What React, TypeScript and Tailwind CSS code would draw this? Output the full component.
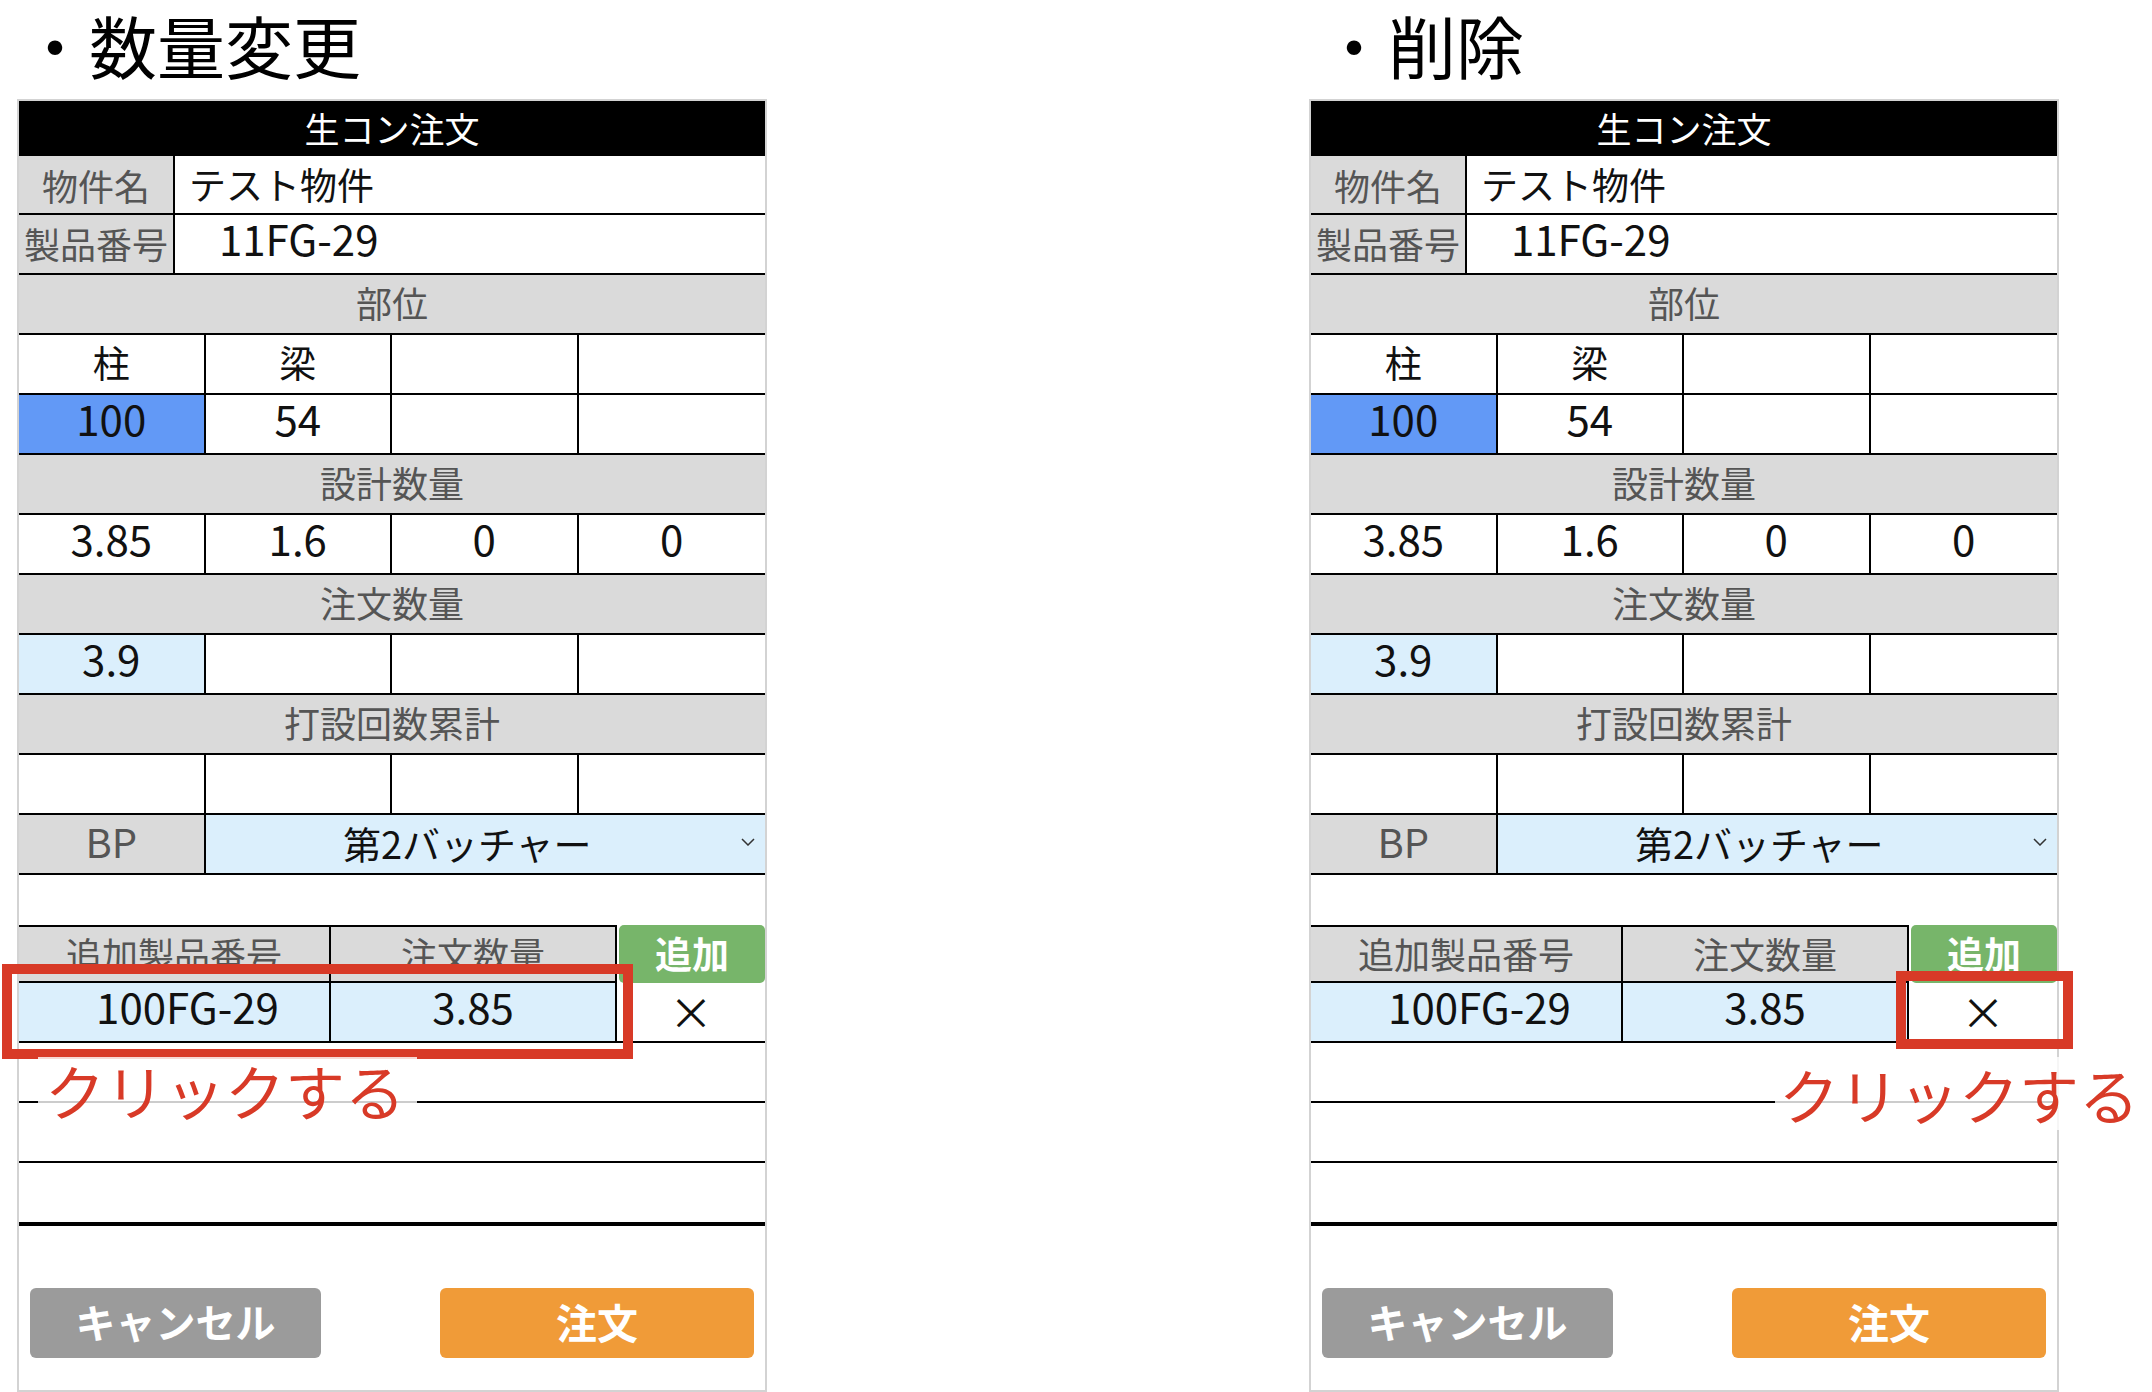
import React from "react";

const FONT = '"Noto Sans CJK JP", "Noto Sans", sans-serif';

const NUM = "text-[42px] leading-none pb-[13px]";
const CJK = "text-[37px] leading-none pb-[4px]";

function Grid4({ cells, bgs }: { cells: string[]; bgs?: string[] }) {
  return (
    <div className="grid grid-cols-4 h-[60px] border-b-2 border-black">
      {cells.map((c, i) => {
        const isNum = /^[0-9.]+$/.test(c);
        return (
          <div
            key={i}
            className={
              "flex items-center justify-center text-[#111] " +
              (isNum ? NUM + " " : CJK + " ") +
              (i < 3 ? "border-r-2 border-black " : "") +
              (bgs && bgs[i] ? bgs[i] : "bg-white")
            }
          >
            {c}
          </div>
        );
      })}
    </div>
  );
}

function Section({ label }: { label: string }) {
  return (
    <div className="h-[60px] bg-[#dadada] border-b-2 border-black flex items-center justify-center text-[#555] text-[36px] leading-none pb-[4px]">
      {label}
    </div>
  );
}

function Panel() {
  return (
    <div className="w-[750px] h-[1293px] border-2 border-[#d3d3d3] flex flex-col bg-white">
      <div className="h-[55px] bg-black text-white text-[35px] leading-none flex items-center justify-center pb-[2px]">
        生コン注文
      </div>
      <div className="h-[59px] flex border-b-2 border-black">
        <div className="w-[156px] bg-[#dadada] border-r-2 border-black flex items-center justify-center text-[#555] text-[36px] leading-none">
          物件名
        </div>
        <div className="flex-1 flex items-center pl-[14px] text-[37px] leading-none text-[#111]">
          テスト物件
        </div>
      </div>
      <div className="h-[60px] flex border-b-2 border-black">
        <div className="w-[156px] bg-[#dadada] border-r-2 border-black flex items-center justify-center text-[#555] text-[36px] leading-none pb-[2px]">
          製品番号
        </div>
        <div className={"flex-1 flex items-center pl-[44px] text-[#111] " + NUM}>11FG-29</div>
      </div>
      <Section label="部位" />
      <Grid4 cells={["柱", "梁", "", ""]} />
      <Grid4 cells={["100", "54", "", ""]} bgs={["bg-[#6299f6]", "", "", ""]} />
      <Section label="設計数量" />
      <Grid4 cells={["3.85", "1.6", "0", "0"]} />
      <Section label="注文数量" />
      <Grid4 cells={["3.9", "", "", ""]} bgs={["bg-[#dbeffc]", "", "", ""]} />
      <Section label="打設回数累計" />
      <Grid4 cells={["", "", "", ""]} />
      <div className="grid grid-cols-4 h-[60px] border-b-2 border-black">
        <div className="bg-[#dadada] border-r-2 border-black flex items-center justify-center text-[#555] text-[40px] leading-none pb-[6px]">
          BP
        </div>
        <div className="col-span-3 bg-[#dbeffc] flex items-center">
          <div className="flex-1 flex items-center justify-center text-[38px] leading-none text-[#111] pb-[2px] pl-[4px]">
            第2バッチャー
          </div>
          <div className="w-[40px] flex items-center justify-end pr-[10px] pb-[4px]">
            <svg width="14" height="8" viewBox="0 0 14 8">
              <polyline points="1,1 7,7 13,1" fill="none" stroke="#333" strokeWidth="1.5" />
            </svg>
          </div>
        </div>
      </div>
      <div className="h-[50px]" />
      <div className="h-[58px] flex">
        <div className="w-[598px] flex border-y-2 border-black">
          <div className="w-[312px] bg-[#dadada] border-r-2 border-black flex items-center justify-center text-[#555] text-[36px] leading-none pb-[2px]">
            追加製品番号
          </div>
          <div className="flex-1 bg-[#dadada] border-r-2 border-black flex items-center justify-center text-[#555] text-[36px] leading-none pb-[2px]">
            注文数量
          </div>
        </div>
        <div className="flex-1 ml-[2px] bg-[#77b56a] rounded-[5px] flex items-center justify-center text-white font-bold text-[37px] leading-none pb-[2px]">
          追加
        </div>
      </div>
      <div className="h-[60px] flex border-b-2 border-black">
        <div className={"w-[312px] bg-[#dbeffc] border-r-2 border-black flex items-center justify-center pl-[27px] text-[#111] " + NUM}>
          100FG-29
        </div>
        <div className={"w-[286px] bg-[#dbeffc] border-r-2 border-black flex items-center justify-center text-[#111] " + NUM}>
          3.85
        </div>
        <div className="flex-1 flex items-center justify-center text-[44px] leading-none text-[#111] pb-[2px]">
          ×
        </div>
      </div>
      <div className="h-[60px] border-b-2 border-black" />
      <div className="h-[60px] border-b-2 border-black" />
      <div className="h-[63px] border-b-4 border-black" />
      <div className="h-[62px]" />
      <div className="h-[70px] flex justify-between px-[11px]">
        <div className="w-[291px] bg-[#9b9b9b] rounded-[6px] flex items-center justify-center text-white font-bold text-[40px] leading-none pb-[4px]">
          キャンセル
        </div>
        <div className="w-[314px] bg-[#f09b38] rounded-[6px] flex items-center justify-center text-white font-bold text-[41px] leading-none pb-[4px]">
          注文
        </div>
      </div>
    </div>
  );
}

export default function App() {
  return (
    <div
      className="relative w-[2152px] h-[1392px] overflow-hidden bg-white text-black"
      style={{ fontFamily: FONT }}
    >
      <div className="flex pl-[17px] gap-[542px]">
        <div className="flex flex-col">
          <div className="h-[99px] pt-[4px] pl-[4px] text-[68px] leading-[1.2]">・数量変更</div>
          <Panel />
        </div>
        <div className="flex flex-col">
          <div className="h-[99px] pt-[4px] pl-[11px] text-[68px] leading-[1.2]">・削除</div>
          <Panel />
        </div>
      </div>

      {/* annotations */}
      <div className="absolute left-[2px] top-[964px] w-[631px] h-[95px] border-[10px] border-[#d83a27]" />
      <div className="absolute left-[38px] top-[1057px] w-[379px] h-[66px] bg-white/80 flex items-center pl-[7px] text-[60px] leading-none text-[#d83a27]">
        クリックする
      </div>
      <div className="absolute left-[1896px] top-[971px] w-[177px] h-[78px] border-[10px] border-[#d83a27]" />
      <div className="absolute left-[1775px] top-[1057px] w-[377px] h-[73px] bg-white/80 flex items-center pl-[4px] text-[60px] leading-none text-[#d83a27]">
        クリックする
      </div>
    </div>
  );
}
